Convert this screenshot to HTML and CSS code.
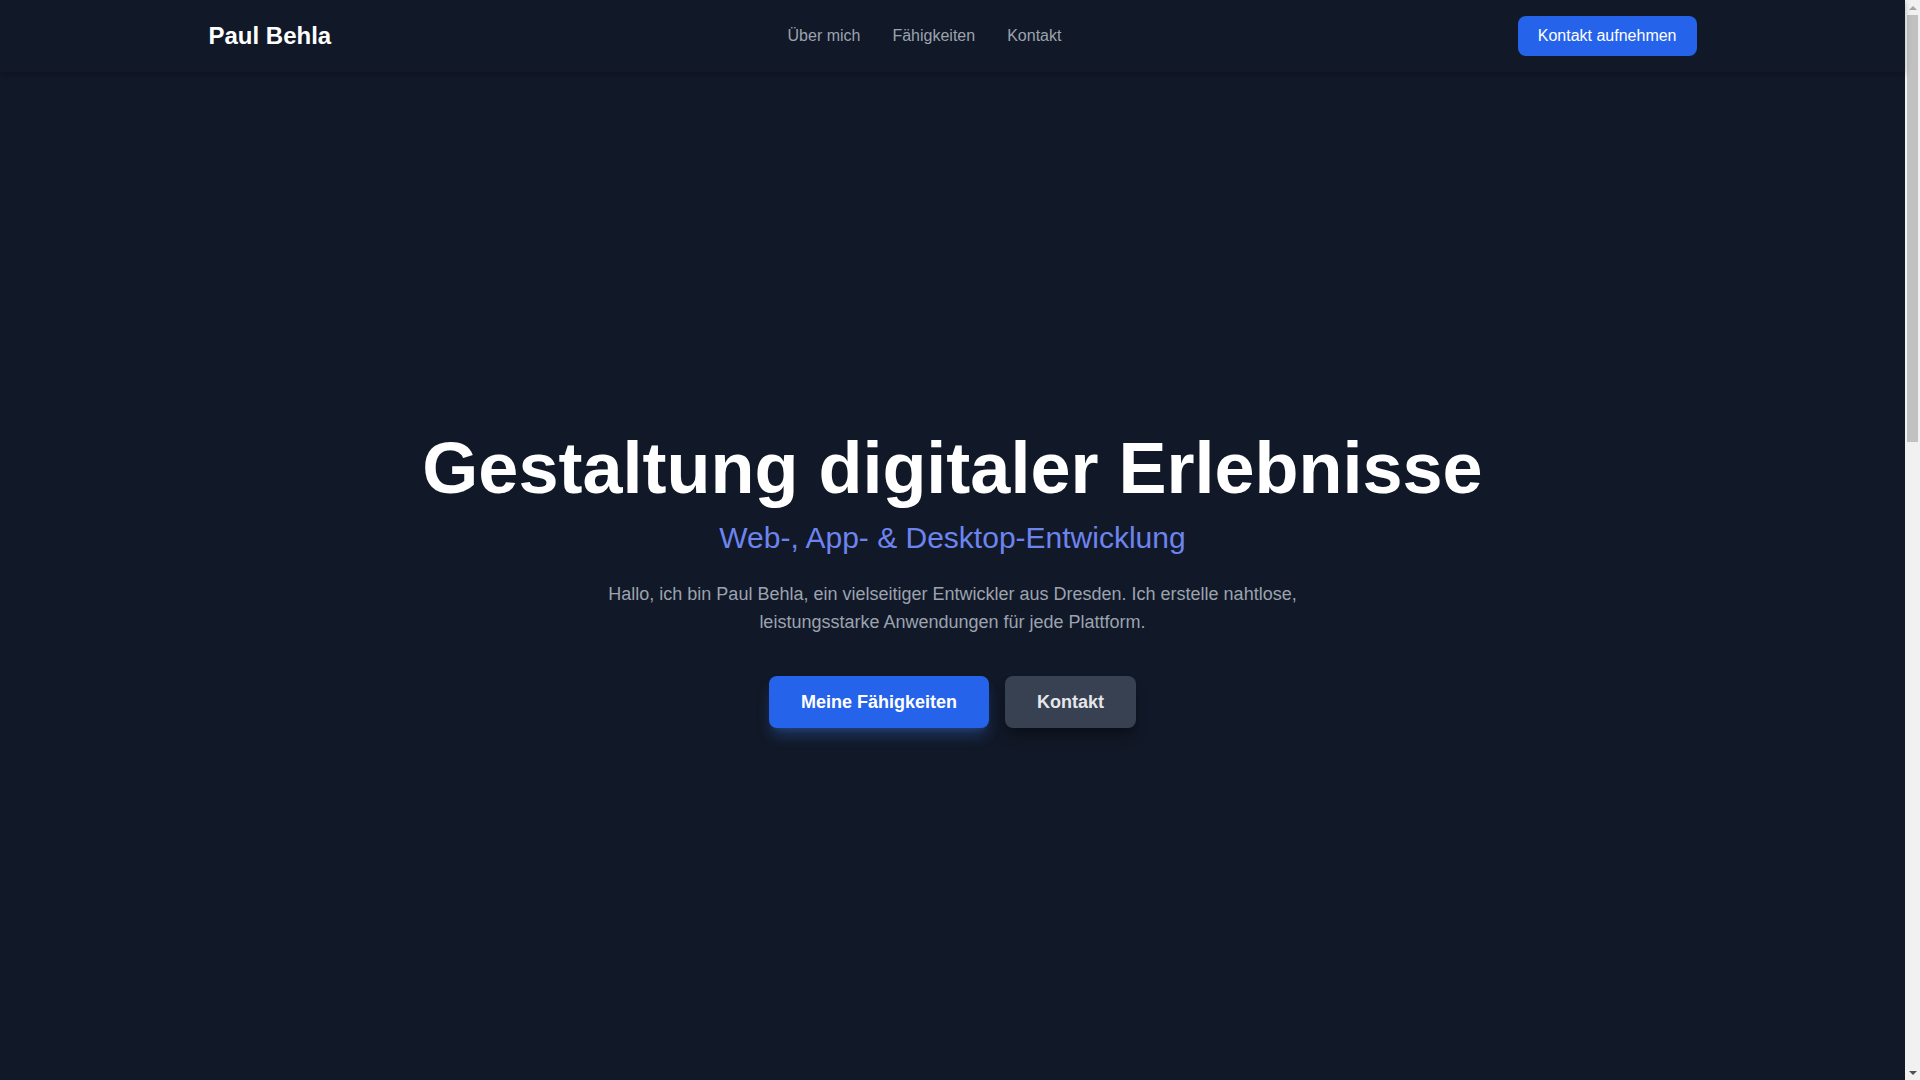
FILE: index.html
```html
<!DOCTYPE html>
<html lang="de">
<head>
    <meta charset="UTF-8">
    <meta name="viewport" content="width=device-width, initial-scale=1.0">
    <title>Paul Behla – Entwickler</title>
    <link rel="stylesheet" href="styles.css">
</head>
<body>

<div class="site">

    <header class="site-header">
        <div class="container header-inner">
            <a href="#" class="logo">Paul Behla</a>
            <nav class="main-nav">
                <a href="#about">Über mich</a>
                <a href="#skills">Fähigkeiten</a>
                <a href="#contact">Kontakt</a>
            </nav>
            <a href="#contact" class="header-btn">Kontakt aufnehmen</a>
        </div>
    </header>

    <section class="hero">
        <h1>Gestaltung digitaler Erlebnisse</h1>
        <h2 class="hero-sub">Web-, App- &amp; Desktop-Entwicklung</h2>
        <p class="hero-text">Hallo, ich bin Paul Behla, ein vielseitiger Entwickler aus Dresden. Ich erstelle nahtlose, leistungsstarke Anwendungen für jede Plattform.</p>
        <div class="hero-actions">
            <a href="#skills" class="btn btn-primary">Meine Fähigkeiten</a>
            <a href="#contact" class="btn btn-secondary">Kontakt</a>
        </div>
    </section>

</div>

<!-- page scrollbar -->
<div class="scrollbar">
    <span class="sb-arrow sb-up"></span>
    <span class="sb-thumb"></span>
    <span class="sb-track"></span>
    <span class="sb-arrow sb-down"></span>
</div>

</body>
</html>
```

FILE: styles.css
```css
* {
    box-sizing: border-box;
}
body {
    margin: 0;
    height: 100vh;
    overflow: hidden;
    display: flex;
    font-family: "Liberation Sans", Arial, sans-serif;
    background: #111827;
    color: #f3f4f6;
}
a {
    text-decoration: none;
}
.site {
    flex: 1;
    min-width: 0;
}
.container {
    max-width: 1536px;
    margin: 0 auto;
    padding: 0 24px;
}

/* header */
.site-header {
    position: relative;
    z-index: 10;
    background: #111827;
    box-shadow: 0 2px 6px rgba(0, 0, 0, 0.25);
}
.header-inner {
    height: 72px;
    display: flex;
    justify-content: space-between;
    align-items: center;
}
.logo {
    font-size: 24px;
    font-weight: bold;
    color: #ffffff;
}
.main-nav {
    display: flex;
    gap: 32px;
}
.main-nav a {
    font-size: 16px;
    color: #9ca3af;
}
.header-btn {
    background: #2563eb;
    color: #ffffff;
    font-size: 16px;
    line-height: 24px;
    padding: 8px 20px;
    border-radius: 8px;
}

/* hero */
.hero {
    height: calc(100vh - 72px);
    padding: 8px 24px 0;
    display: flex;
    flex-direction: column;
    align-items: center;
    justify-content: center;
    text-align: center;
}
.hero h1 {
    font-size: 72px;
    line-height: 1;
    font-weight: bold;
    color: #ffffff;
    margin: 0 0 16px;
}
.hero-sub {
    font-size: 30px;
    line-height: 36px;
    font-weight: normal;
    color: #6d84ef;
    margin: 0 0 24px;
}
.hero-text {
    max-width: 768px;
    font-size: 18px;
    line-height: 28px;
    color: #9ca3af;
    margin: 0 0 40px;
}
.hero-actions {
    display: flex;
    gap: 16px;
}
.btn {
    display: inline-block;
    font-size: 18px;
    line-height: 28px;
    font-weight: bold;
    padding: 12px 32px;
    border-radius: 8px;
}
.btn-primary {
    background: #2563eb;
    color: #ffffff;
    box-shadow: 0 10px 15px -3px rgba(59, 130, 246, 0.3), 0 4px 6px -4px rgba(59, 130, 246, 0.3);
}
.btn-secondary {
    background: #374151;
    color: #e5e7eb;
    box-shadow: 0 10px 15px -3px rgba(0, 0, 0, 0.3), 0 4px 6px -4px rgba(0, 0, 0, 0.3);
}

/* scrollbar */
.scrollbar {
    width: 15px;
    flex-shrink: 0;
    background: #f1f1f1;
    display: flex;
    flex-direction: column;
    align-items: center;
}
.sb-arrow {
    width: 15px;
    height: 15px;
    display: flex;
    align-items: center;
    justify-content: center;
}
.sb-arrow::before {
    content: "";
    border-left: 4px solid transparent;
    border-right: 4px solid transparent;
}
.sb-up::before {
    border-bottom: 4px solid #a3a3a3;
}
.sb-down::before {
    border-top: 4px solid #505050;
}
.sb-thumb {
    width: 11px;
    height: 427px;
    background: #c1c1c1;
}
.sb-track {
    flex: 1;
}
```
